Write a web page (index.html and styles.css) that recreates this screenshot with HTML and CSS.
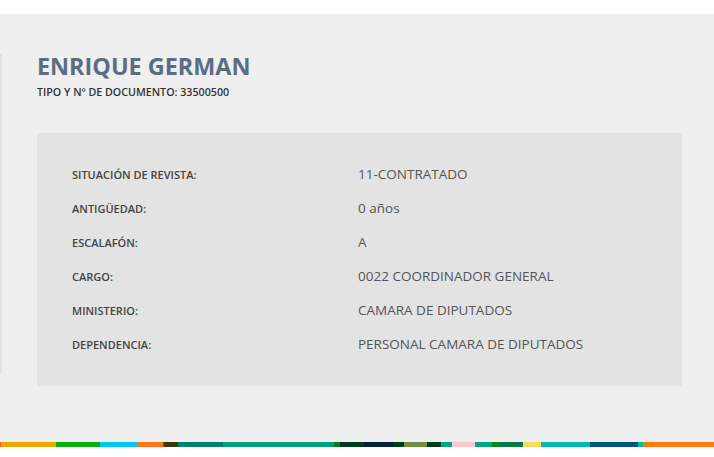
FILE: index.html
```html
<!DOCTYPE html>
<html lang="es">
<head>
  <meta charset="UTF-8" />
  <meta name="viewport" content="width=device-width, initial-scale=1.0"/>
  <title>Legajo | Enrique German</title>
  <link rel="stylesheet" href="styles.css">
</head>
<body>
  <header class="top-bar"></header>

  <main class="page">
    <div class="side-edge"></div>

    <section class="profile">
      <h1 class="profile-name">ENRIQUE GERMAN</h1>
      <div class="profile-doc">TIPO Y Nº DE DOCUMENTO: 33500500</div>

      <div class="info-card">
        <div class="info-row">
          <div class="info-label">SITUACIÓN DE REVISTA:</div>
          <div class="info-value">11-CONTRATADO</div>
        </div>
        <div class="info-row">
          <div class="info-label">ANTIGÜEDAD:</div>
          <div class="info-value">0 años</div>
        </div>
        <div class="info-row">
          <div class="info-label">ESCALAFÓN:</div>
          <div class="info-value">A</div>
        </div>
        <div class="info-row">
          <div class="info-label">CARGO:</div>
          <div class="info-value">0022 COORDINADOR GENERAL</div>
        </div>
        <div class="info-row">
          <div class="info-label">MINISTERIO:</div>
          <div class="info-value">CAMARA DE DIPUTADOS</div>
        </div>
        <div class="info-row">
          <div class="info-label">DEPENDENCIA:</div>
          <div class="info-value">PERSONAL CAMARA DE DIPUTADOS</div>
        </div>
      </div>
    </section>
  </main>

  <div class="color-strip"></div>
</body>
</html>
```

FILE: styles.css
```css
* {
  box-sizing: border-box;
  margin: 0;
  padding: 0;
}

body {
  font-family: 'Open Sans', sans-serif;
  background-color: #fff;
  min-height: 100vh;
}

.top-bar {
  height: 14px;
  background-color: #fff;
}

.page {
  display: flex;
  height: 428px;
  background-color: #efefef;
}

.side-edge {
  width: 2px;
  height: 319px;
  margin-top: 40px;
  background-color: #e1e1e1;
  flex-shrink: 0;
}

.profile {
  padding: 36px 0 0 35px;
  width: 680px;
}

.profile-name {
  font-size: 23.4px;
  font-weight: 700;
  line-height: 32px;
  color: #5b6d83;
}

.profile-doc {
  font-size: 10.7px;
  font-weight: 600;
  line-height: 14px;
  color: #333;
  margin-top: 3px;
}

.info-card {
  margin-top: 34px;
  background-color: #e3e3e3;
  border-radius: 2px;
  padding: 24px 0 25px 35px;
}

.info-row {
  display: flex;
  align-items: center;
  height: 34px;
}

.info-label {
  width: 286px;
  font-size: 11px;
  font-weight: 600;
  color: #444;
}

.info-value {
  font-size: 13.5px;
  color: #555;
}

.color-strip {
  height: 5px;
  background: linear-gradient(to right,
    #ff5a14 0 1px, #e8a800 1px 56px, #0aae0a 56px 100px, #00c8f0 100px 138px,
    #ff7319 138px 163px, #9a4a10 163px 164px, #3b3b00 164px 178px, #008070 178px 223px,
    #00a07a 223px 334px, #0a7a2a 334px 340px, #003b1e 340px 364px, #002239 364px 393px,
    #003b16 393px 404px, #6f8f45 404px 427px, #003b16 427px 441px, #00a87a 441px 452px,
    #ffc7d0 452px 475px, #00a87a 475px 492px, #0a8a1a 492px 500px, #007a46 500px 523px,
    #ffd95a 523px 541px, #00b8b8 541px 590px, #00557a 590px 638px, #00b8b8 638px 643px,
    #ff7a0a 643px 714px);
}
```
